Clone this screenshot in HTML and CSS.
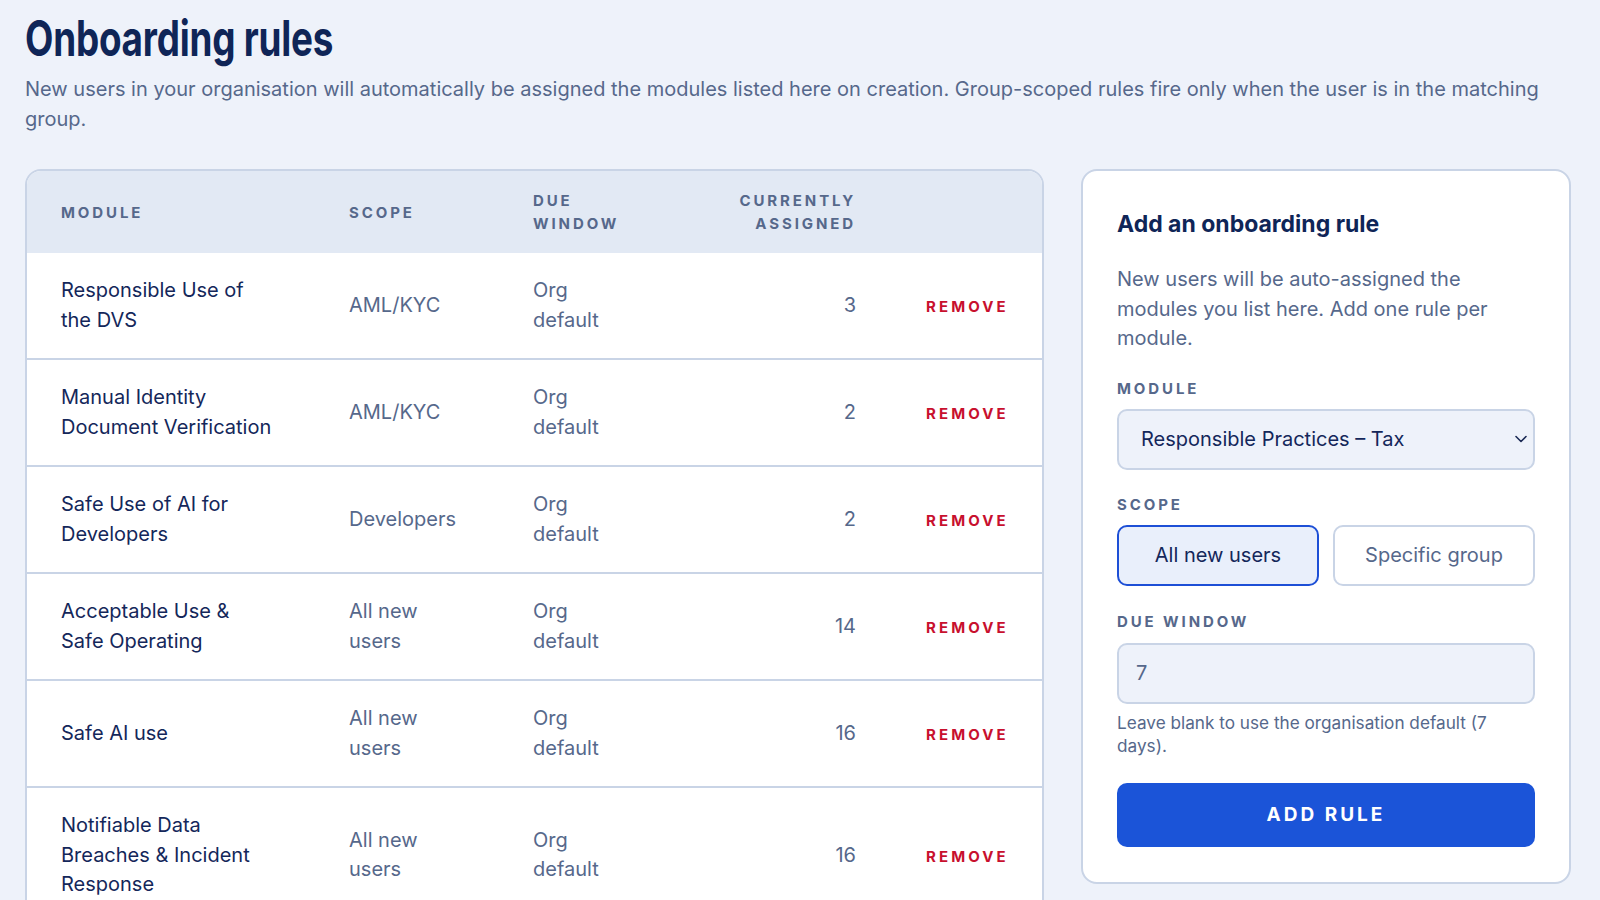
FILE: index.html
```html
<!DOCTYPE html>
<html lang="en">
<head>
    <meta charset="UTF-8">
    <meta name="viewport" content="width=device-width, initial-scale=1.0">
    <title>Onboarding rules</title>
    <link rel="stylesheet" href="styles.css">
</head>
<body>
    <main class="page">
        <h1 class="title"><span>Onboarding rules</span></h1>
        <p class="intro">New users in your organisation will automatically be assigned the modules listed here on creation. Group-scoped rules fire only when the user is in the matching group.</p>

        <div class="layout">
            <section class="rules-card">
                <table class="rules">
                    <colgroup>
                        <col class="c-module">
                        <col class="c-scope">
                        <col class="c-due">
                        <col class="c-count">
                        <col class="c-action">
                    </colgroup>
                    <thead>
                        <tr>
                            <th>Module</th>
                            <th>Scope</th>
                            <th>Due window</th>
                            <th class="num">Currently assigned</th>
                            <th></th>
                        </tr>
                    </thead>
                    <tbody>
                        <tr>
                            <td class="module">Responsible Use of the DVS</td>
                            <td>AML/KYC</td>
                            <td>Org default</td>
                            <td class="num">3</td>
                            <td><button class="remove-btn">Remove</button></td>
                        </tr>
                        <tr>
                            <td class="module">Manual Identity Document Verification</td>
                            <td>AML/KYC</td>
                            <td>Org default</td>
                            <td class="num">2</td>
                            <td><button class="remove-btn">Remove</button></td>
                        </tr>
                        <tr>
                            <td class="module">Safe Use of AI for Developers</td>
                            <td>Developers</td>
                            <td>Org default</td>
                            <td class="num">2</td>
                            <td><button class="remove-btn">Remove</button></td>
                        </tr>
                        <tr>
                            <td class="module">Acceptable Use &amp; Safe Operating</td>
                            <td>All new users</td>
                            <td>Org default</td>
                            <td class="num">14</td>
                            <td><button class="remove-btn">Remove</button></td>
                        </tr>
                        <tr>
                            <td class="module">Safe AI use</td>
                            <td>All new users</td>
                            <td>Org default</td>
                            <td class="num">16</td>
                            <td><button class="remove-btn">Remove</button></td>
                        </tr>
                        <tr>
                            <td class="module">Notifiable Data Breaches &amp; Incident Response</td>
                            <td>All new users</td>
                            <td>Org default</td>
                            <td class="num">16</td>
                            <td><button class="remove-btn">Remove</button></td>
                        </tr>
                    </tbody>
                </table>
            </section>

            <aside class="form-card">
                <h2 class="form-title">Add an onboarding rule</h2>
                <p class="form-desc">New users will be auto-assigned the modules you list here. Add one rule per module.</p>

                <label class="field-label">Module</label>
                <div class="select">
                    <span>Responsible Practices – Tax</span>
                    <svg width="14" height="10" viewBox="0 0 14 10" fill="none" stroke="#1b2a55" stroke-width="1.6" stroke-linecap="round" stroke-linejoin="round"><polyline points="2,2.5 7,7.5 12,2.5"/></svg>
                </div>

                <label class="field-label">Scope</label>
                <div class="scope-toggle">
                    <button class="scope-btn active">All new users</button>
                    <button class="scope-btn">Specific group</button>
                </div>

                <label class="field-label">Due window</label>
                <div class="text-input">7</div>
                <p class="hint">Leave blank to use the organisation default (7 days).</p>

                <button class="add-btn">Add rule</button>
            </aside>
        </div>
    </main>
</body>
</html>
```

FILE: styles.css
```css
* {
    margin: 0;
    padding: 0;
    box-sizing: border-box;
}

body {
    background: #eef2fa;
    font-family: 'Inter', 'Liberation Sans', sans-serif;
    color: #14275a;
    overflow: hidden;
}

.page {
    padding: 11px 29px 0 25px;
}

/* No condensed face is installed, so the bold heading is squeezed */
.title {
    font-size: 49px;
    font-weight: 700;
    line-height: 56px;
    color: #0f2557;
    white-space: nowrap;
}

.title span {
    display: inline-block;
    transform: scaleX(0.752);
    transform-origin: left center;
    letter-spacing: -0.3px;
}

.intro {
    margin-top: 8px;
    font-size: 20px;
    line-height: 29.5px;
    color: #56688b;
}

.layout {
    display: grid;
    grid-template-columns: 1019px 490px;
    gap: 37px;
    margin-top: 35px;
    align-items: start;
}

/* Rules table */
.rules-card {
    background: #fff;
    border: 2px solid #c9d4e6;
    border-radius: 16px;
    overflow: hidden;
}

.rules {
    width: 100%;
    border-collapse: collapse;
    table-layout: fixed;
}

.c-module { width: 286px; }
.c-scope { width: 184px; }
.c-due { width: 172px; }
.c-count { width: 223px; }
.c-action { width: 150px; }

.rules th {
    background: #e2e9f4;
    height: 82px;
    padding: 0 36px;
    text-align: left;
    font-size: 15px;
    font-weight: 700;
    line-height: 23px;
    letter-spacing: 2.9px;
    text-transform: uppercase;
    color: #56688b;
}

.rules td {
    padding: 23px 36px;
    font-size: 20px;
    line-height: 29.5px;
    color: #56688b;
    border-top: 2px solid #c9d4e6;
    vertical-align: middle;
}

.rules th:first-child,
.rules td:first-child {
    padding-left: 34px;
}

.rules tbody tr:first-child td {
    border-top: none;
}

.rules td.module {
    color: #14275a;
}

.rules .num {
    text-align: right;
}

.remove-btn {
    background: none;
    border: none;
    font-family: inherit;
    font-size: 15px;
    font-weight: 700;
    letter-spacing: 3.1px;
    text-transform: uppercase;
    color: #c8102e;
    cursor: pointer;
    margin-left: -2px;
}

/* Add rule form */
.form-card {
    background: #fff;
    border: 2px solid #c9d4e6;
    border-radius: 16px;
    padding: 38px 34px 35px;
}

.form-title {
    font-size: 23px;
    font-weight: 700;
    line-height: 30px;
    color: #0f2557;
}

.form-desc {
    margin-top: 26px;
    font-size: 20px;
    line-height: 29.5px;
    color: #56688b;
}

.field-label {
    display: block;
    margin-top: 25px;
    margin-bottom: 10px;
    font-size: 15px;
    font-weight: 700;
    line-height: 20px;
    letter-spacing: 2.9px;
    text-transform: uppercase;
    color: #56688b;
}

.scope-toggle + .field-label {
    margin-top: 26px;
    margin-bottom: 11px;
}

.select {
    display: flex;
    align-items: center;
    justify-content: space-between;
    height: 61px;
    padding: 0 5px 0 22px;
    background: #eef2fa;
    border: 2px solid #c9d4e6;
    border-radius: 10px;
    font-size: 20px;
    color: #14275a;
}

.scope-toggle {
    display: grid;
    grid-template-columns: 1fr 1fr;
    gap: 14px;
}

.scope-btn {
    height: 61px;
    background: #fff;
    border: 2px solid #c9d4e6;
    border-radius: 10px;
    font-family: inherit;
    font-size: 20px;
    color: #56688b;
    cursor: pointer;
}

.scope-btn.active {
    background: #e9effb;
    border-color: #1d4fd6;
    color: #14275a;
}

.text-input {
    display: flex;
    align-items: center;
    height: 61px;
    padding: 0 17px;
    background: #eef2fa;
    border: 2px solid #c9d4e6;
    border-radius: 10px;
    font-size: 20px;
    color: #56688b;
}

.hint {
    margin-top: 7px;
    font-size: 17.2px;
    line-height: 23.5px;
    color: #56688b;
}

.add-btn {
    display: block;
    width: 100%;
    height: 64px;
    margin-top: 25px;
    background: #1b54d8;
    border: none;
    border-radius: 10px;
    font-family: inherit;
    font-size: 19px;
    font-weight: 700;
    letter-spacing: 3px;
    text-transform: uppercase;
    color: #fff;
    cursor: pointer;
}
```
